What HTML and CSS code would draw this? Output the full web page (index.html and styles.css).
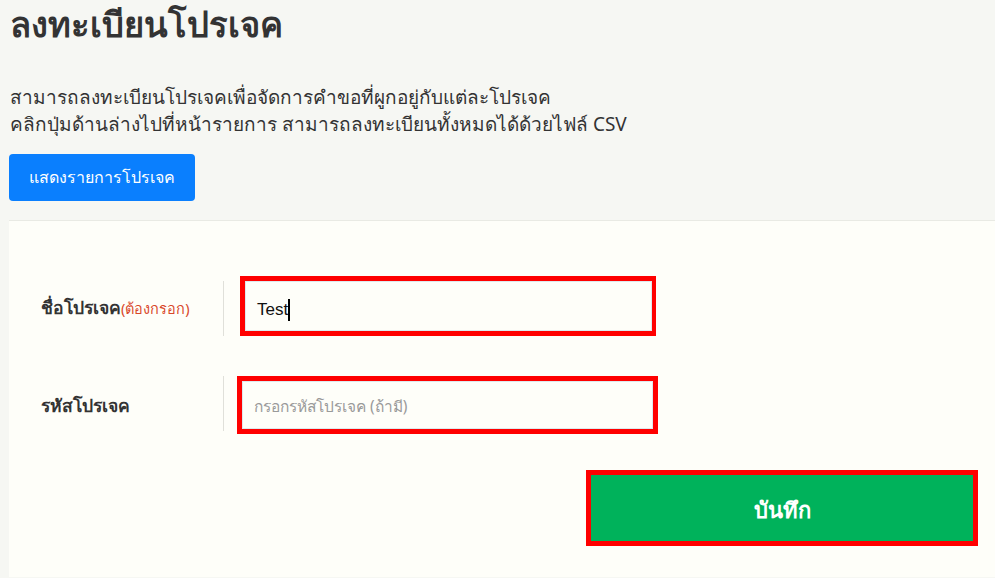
FILE: index.html
```html
<!DOCTYPE html>
<html lang="th">
<head>
<meta charset="utf-8">
<title>ลงทะเบียนโปรเจค</title>
<link rel="stylesheet" href="styles.css">
</head>
<body>
<div class="page">
  <h1 class="title">ลงทะเบียนโปรเจค</h1>
  <p class="desc">สามารถลงทะเบียนโปรเจคเพื่อจัดการคำขอที่ผูกอยู่กับแต่ละโปรเจค<br>คลิกปุ่มด้านล่างไปที่หน้ารายการ สามารถลงทะเบียนทั้งหมดได้ด้วยไฟล์ CSV</p>
  <button class="btn-list">แสดงรายการโปรเจค</button>
  <div class="card">
    <div class="row row-1">
      <div class="label"><span class="label-main">ชื่อโปรเจค</span><span class="req">(ต้องกรอก)</span></div>
      <div class="field">
        <div class="hl hl-1">
          <div class="input input-1"><span class="value">Test</span><span class="caret"></span></div>
        </div>
      </div>
    </div>
    <div class="row row-2">
      <div class="label"><span class="label-main">รหัสโปรเจค</span></div>
      <div class="field">
        <div class="hl hl-2">
          <div class="input input-2"><span class="placeholder">กรอกรหัสโปรเจค (ถ้ามี)</span></div>
        </div>
      </div>
    </div>
    <div class="actions">
      <div class="hl hl-save">
        <button class="btn-save">บันทึก</button>
      </div>
    </div>
  </div>
</div>
</body>
</html>
```

FILE: styles.css
```css
html, body {
  margin: 0;
  padding: 0;
  background: #f6f7f3;
  font-family: "Noto Sans", "DejaVu Sans", sans-serif;
  color: #333;
  overflow: hidden;
}
.page {
  padding: 0 0 0 9px;
}
.title {
  margin: 0;
  padding: 4px 0 0 1px;
  font-size: 34.5px;
  line-height: 40px;
  font-weight: 700;
  color: #333;
}
.desc {
  margin: 40px 0 0 1px;
  font-size: 19px;
  line-height: 27px;
  color: #333;
}
.btn-list {
  margin-top: 16px;
  display: block;
  width: 186px;
  height: 47px;
  border: none;
  border-radius: 4px;
  background: #0a7ffe;
  color: #fff;
  font-family: inherit;
  font-size: 16px;
  padding: 0;
}
.card {
  margin-top: 19px;
  width: 1000px;
  height: 357px;
  background: #fefef9;
  border-top: 1px solid #e9eae4;
  padding-top: 55px;
  box-sizing: border-box;
}
.row {
  display: flex;
  align-items: stretch;
}
.row-2 {
  margin-top: 40px;
}
.label {
  width: 214px;
  box-sizing: border-box;
  padding-left: 32px;
  padding-top: 4px;
  display: flex;
  align-items: center;
  font-size: 17.5px;
}
.label-main {
  font-weight: 700;
  color: #333;
}
.req {
  font-size: 14.5px;
  color: #d9482b;
}
.field {
  border-left: 1px solid #e0e0da;
  display: flex;
  align-items: flex-start;
}
.row-1 .field { margin-top: 5px; }
.row-1 .hl { margin-top: -5px; }
.row-2 .field { height: 55px; }
.hl {
  border: 5px solid #ff0000;
  box-sizing: border-box;
}
.hl-1 {
  margin-left: 16px;
  width: 416px;
  height: 60px;
  border-right-width: 4px;
}
.hl-2 {
  margin-left: 13px;
  width: 421px;
  height: 58px;
}
.input {
  height: 100%;
  box-sizing: border-box;
  border: 1px solid #dde9ee;
  background: #fefef9;
  display: flex;
  align-items: center;
  padding-left: 11px;
  font-size: 17px;
}
.input-1 {
  padding-top: 8px;
}
.input-2 {
  padding-top: 3px;
}
.value {
  font-family: "Liberation Sans", sans-serif;
  color: #111;
}
.caret {
  display: inline-block;
  width: 2px;
  height: 22px;
  background: #000;
}
.placeholder {
  font-size: 15.5px;
  color: #9a9a9a;
}
.actions {
  margin-top: 39px;
  padding-left: 577px;
}
.hl-save {
  width: 392px;
  height: 76px;
}
.btn-save {
  display: block;
  width: 100%;
  height: 100%;
  border: none;
  background: #00b25b;
  color: #fff;
  font-family: inherit;
  font-size: 22px;
  font-weight: 700;
  padding: 4px 0 0;
}
```
